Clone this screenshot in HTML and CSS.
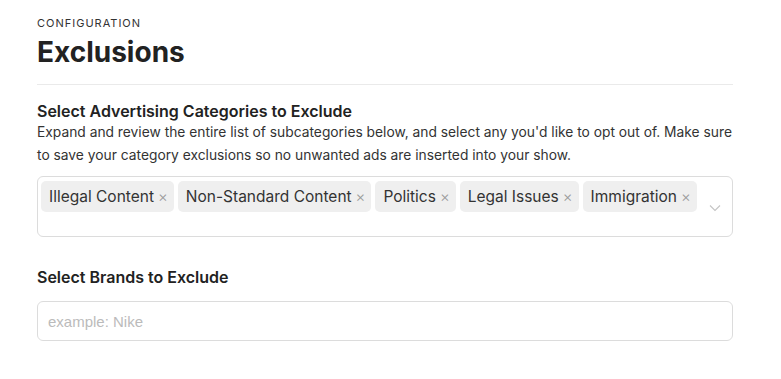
FILE: index.html
```html
<!DOCTYPE html>
<html lang="en">
<head>
    <meta charset="UTF-8">
    <meta name="viewport" content="width=device-width, initial-scale=1.0">
    <title>Exclusions</title>
    <link rel="stylesheet" href="styles.css">
</head>
<body>
    <div class="container">
        <div class="eyebrow">CONFIGURATION</div>
        <h1>Exclusions</h1>
        <hr class="divider">

        <div class="section">
            <h3>Select Advertising Categories to Exclude</h3>
            <p class="help">Expand and review the entire list of subcategories below, and select any you'd like to opt out of. Make sure to save your category exclusions so no unwanted ads are inserted into your show.</p>

            <div class="multi-select">
                <div class="tags">
                    <span class="tag">Illegal Content<span class="remove">&times;</span></span>
                    <span class="tag">Non-Standard Content<span class="remove">&times;</span></span>
                    <span class="tag">Politics<span class="remove">&times;</span></span>
                    <span class="tag">Legal Issues<span class="remove">&times;</span></span>
                    <span class="tag">Immigration<span class="remove">&times;</span></span>
                </div>
                <svg class="chevron" width="12" height="8" viewBox="0 0 12 8">
                    <path d="M1 1.5 L6 6.5 L11 1.5" fill="none" stroke="#c4c4c4" stroke-width="1.1"/>
                </svg>
            </div>
        </div>

        <div class="section">
            <h3>Select Brands to Exclude</h3>
            <input type="text" class="text-input" placeholder="example: Nike">
        </div>
    </div>
</body>
</html>
```

FILE: styles.css
```css
body {
    margin: 0;
    background-color: #fff;
    font-family: Inter, "DejaVu Sans", sans-serif;
    color: #222;
}
.container {
    width: 696px;
    padding: 16px 37px 0 37px;
}
.eyebrow {
    font-size: 11px;
    letter-spacing: 1px;
    color: #333;
    line-height: 14px;
}
h1 {
    font-size: 28px;
    font-weight: 700;
    color: #222;
    margin: 3px 0 0 0;
    line-height: 38px;
}
.divider {
    border: none;
    border-top: 1px solid #eaeaea;
    margin: 13px 0 0 0;
}
.section {
    margin-top: 15px;
}
.section h3 {
    font-size: 16px;
    font-weight: 600;
    margin: 0;
    line-height: 22px;
    color: #222;
}
.help {
    font-size: 13.8px;
    line-height: 23px;
    color: #333;
    margin: -1px 0 9px 0;
}
.multi-select {
    display: flex;
    align-items: center;
    border: 1px solid #dcdcdc;
    border-radius: 6px;
    box-sizing: border-box;
    height: 61px;
    padding: 0 11px 0 3px;
}
.tags {
    flex: 1;
    display: flex;
    flex-wrap: wrap;
    gap: 4px;
    align-self: flex-start;
    padding-top: 4px;
}
.tag {
    background-color: #efefef;
    border-radius: 5px;
    height: 31px;
    line-height: 31px;
    padding: 0 6px 0 8px;
    font-size: 15.5px;
    color: #333;
}
.remove {
    color: #999;
    font-size: 15px;
    font-weight: 300;
    margin-left: 4px;
}
.chevron {
    display: block;
    margin-top: 2px;
}
.section + .section {
    margin-top: 29px;
}
.section + .section h3 {
    margin-bottom: 13px;
}
.text-input {
    width: 100%;
    box-sizing: border-box;
    height: 40px;
    border: 1px solid #dcdcdc;
    border-radius: 6px;
    padding: 0 10px;
    font-family: "Liberation Sans", Arial, sans-serif;
    font-size: 15px;
    color: #333;
}
.text-input::placeholder {
    color: #bbb;
}
```
